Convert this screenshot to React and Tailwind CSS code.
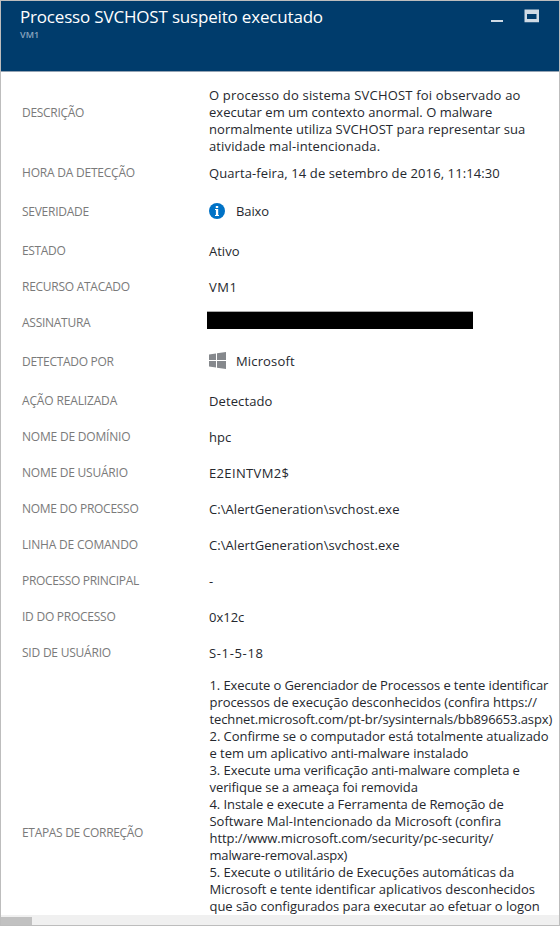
import React from "react";

const description = [
  ["O processo do sistema SVCHOST foi observado ao", "tracking-[0.19px]"],
  ["executar em um contexto anormal. O malware", "tracking-[0.02px]"],
  ["normalmente utiliza SVCHOST para representar sua", "tracking-[0.06px]"],
  ["atividade mal-intencionada.", "tracking-[0.13px]"],
];

const steps = [
  ["1. Execute o Gerenciador de Processos e tente identificar", "tracking-[-0.1px]"],
  ["processos de execução desconhecidos (confira https://", "tracking-[-0.06px]"],
  ["technet.microsoft.com/pt-br/sysinternals/bb896653.aspx)", "tracking-[-0.115px]"],
  ["2. Confirme se o computador está totalmente atualizado", "tracking-[-0.055px]"],
  ["e tem um aplicativo anti-malware instalado", "tracking-[-0.05px]"],
  ["3. Execute uma verificação anti-malware completa e", "tracking-[-0.075px]"],
  ["verifique se a ameaça foi removida", "tracking-[-0.08px]"],
  ["4. Instale e execute a Ferramenta de Remoção de", "tracking-[-0.085px]"],
  ["Software Mal-Intencionado da Microsoft (confira", "tracking-[-0.01px]"],
  ["http://www.microsoft.com/security/pc-security/", "tracking-[-0.055px]"],
  ["malware-removal.aspx)", "tracking-[-0.18px]"],
  ["5. Execute o utilitário de Execuções automáticas da", "tracking-[-0.075px]"],
  ["Microsoft e tente identificar aplicativos desconhecidos", "tracking-[-0.05px]"],
  ["que são configurados para executar ao efetuar o logon", "tracking-[-0.035px]"],
];

function InfoIcon() {
  return (
    <svg className="mb-[2px] mr-[11px] h-4 w-4" viewBox="0 0 16 16">
      <circle cx="8" cy="8" r="8" fill="#0072c6" />
      <rect x="6.8" y="3" width="2.4" height="2" fill="#fff" />
      <path d="M6 6H9.2V12H10V13H6V12H6.9V7H6Z" fill="#fff" />
    </svg>
  );
}

function WindowsIcon() {
  return (
    <svg className="mb-[3px] mr-[10px] h-[17px] w-[17px]" viewBox="0 0 17 17" fill="#85888c">
      <path d="M0 2.6L7 1.5V8H0ZM8 1.3L17 0V8H8ZM0 9H7V15.5L0 14.4ZM8 9H17V17L8 15.7Z" />
    </svg>
  );
}

function Row({ label, track = "tracking-[-0.27px]", height = "h-9", children }) {
  return (
    <div className={`flex shrink-0 items-center ${height}`}>
      <div className={`w-[208px] shrink-0 whitespace-nowrap pl-[21px] text-[12px] text-[#7a7a7a] ${track}`}>
        {label}
      </div>
      <div className="flex items-center whitespace-nowrap">{children}</div>
    </div>
  );
}

function Value({ track = "tracking-normal", children }) {
  return <div className={`pt-[2px] ${track}`}>{children}</div>;
}

function Lines({ items }) {
  return (
    <div>
      {items.map(([text, track]) => (
        <div key={text} className={`h-[17px] leading-[17px] ${track}`}>{text}</div>
      ))}
    </div>
  );
}

export default function App() {
  return (
    <div className="flex h-[926px] w-[560px] flex-col overflow-hidden border border-[#bdbdbd] bg-white font-['Open_Sans',sans-serif] text-[13px] text-[#25282e]">
      <header className="flex h-[71px] shrink-0 justify-between border-b border-[#94a3b3] bg-[#003c6c] pl-[19px]">
        <div className="whitespace-nowrap">
          <h1 className="mt-[4px] h-[23px] text-[17px] leading-[24px] tracking-[-0.18px] text-white">Processo SVCHOST suspeito executado</h1>
          <div className="text-[9px] font-semibold leading-[13px] tracking-[0.1px] text-[#8ba7c0]">VM1</div>
        </div>
        <svg className="h-[40px] w-[70px]" viewBox="489 1 70 40">
          <path d="M491 20H503V22H491Z" fill="#d0dbe5" />
          <path fillRule="evenodd" d="M524.5 9.5H539V22.3H524.5ZM527 14V19H536.5V14Z" fill="#d0dbe5" />
        </svg>
      </header>
      <main className="flex min-h-0 flex-1 flex-col overflow-hidden">
        <Row label={<div className="pb-[2px]">DESCRIÇÃO</div>} track="tracking-[-0.3px]" height="h-[83px]">
          <div className="pt-[15px]"><Lines items={description} /></div>
        </Row>
        <Row label="HORA DA DETECÇÃO" track="tracking-[-0.22px]">
          <Value track="tracking-[0.1px]">Quarta-feira, 14 de setembro de 2016, 11:14:30</Value>
        </Row>
        <Row label="SEVERIDADE" height="h-[42px]">
          <InfoIcon /><span className="tracking-[-0.1px]">Baixo</span>
        </Row>
        <Row label="ESTADO" track="tracking-[-0.35px]"><Value>Ativo</Value></Row>
        <Row label="RECURSO ATACADO"><Value track="tracking-[0.5px]">VM1</Value></Row>
        <Row label="ASSINATURA">
          <div className="-ml-[2px] mb-[7px] h-[18px] w-[266px] border-t border-[#aaa] bg-black" />
        </Row>
        <Row label="DETECTADO POR" track="tracking-[-0.31px]" height="h-[42px]">
          <WindowsIcon /><span className="tracking-[0.15px]">Microsoft</span>
        </Row>
        <Row label="AÇÃO REALIZADA" track="tracking-[-0.15px]"><Value track="tracking-[0.1px]">Detectado</Value></Row>
        <Row label="NOME DE DOMÍNIO" track="tracking-[-0.2px]"><Value>hpc</Value></Row>
        <Row label="NOME DE USUÁRIO" track="tracking-[-0.23px]"><Value track="tracking-[0.35px]">E2EINTVM2$</Value></Row>
        <Row label="NOME DO PROCESSO"><Value track="tracking-[0.07px]">C:\AlertGeneration\svchost.exe</Value></Row>
        <Row label="LINHA DE COMANDO" track="tracking-[-0.2px]"><Value track="tracking-[0.07px]">C:\AlertGeneration\svchost.exe</Value></Row>
        <Row label="PROCESSO PRINCIPAL" track="tracking-[-0.33px]"><Value>-</Value></Row>
        <Row label="ID DO PROCESSO" track="tracking-[-0.25px]"><Value>0x12c</Value></Row>
        <Row label="SID DE USUÁRIO" track="tracking-[-0.22px]"><Value track="tracking-[0.65px]">S-1-5-18</Value></Row>
        <Row label={<div className="pt-[74px]">ETAPAS DE CORREÇÃO</div>} track="tracking-[-0.31px]" height="h-[250px]">
          <div className="pl-[0.5px]"><Lines items={steps} /></div>
        </Row>
      </main>
      <footer className="h-[10px] shrink-0 bg-[#f0f0f0] pt-[2px]">
        <div className="h-2 w-[31px] bg-[#c1c1c1]" />
      </footer>
    </div>
  );
}
